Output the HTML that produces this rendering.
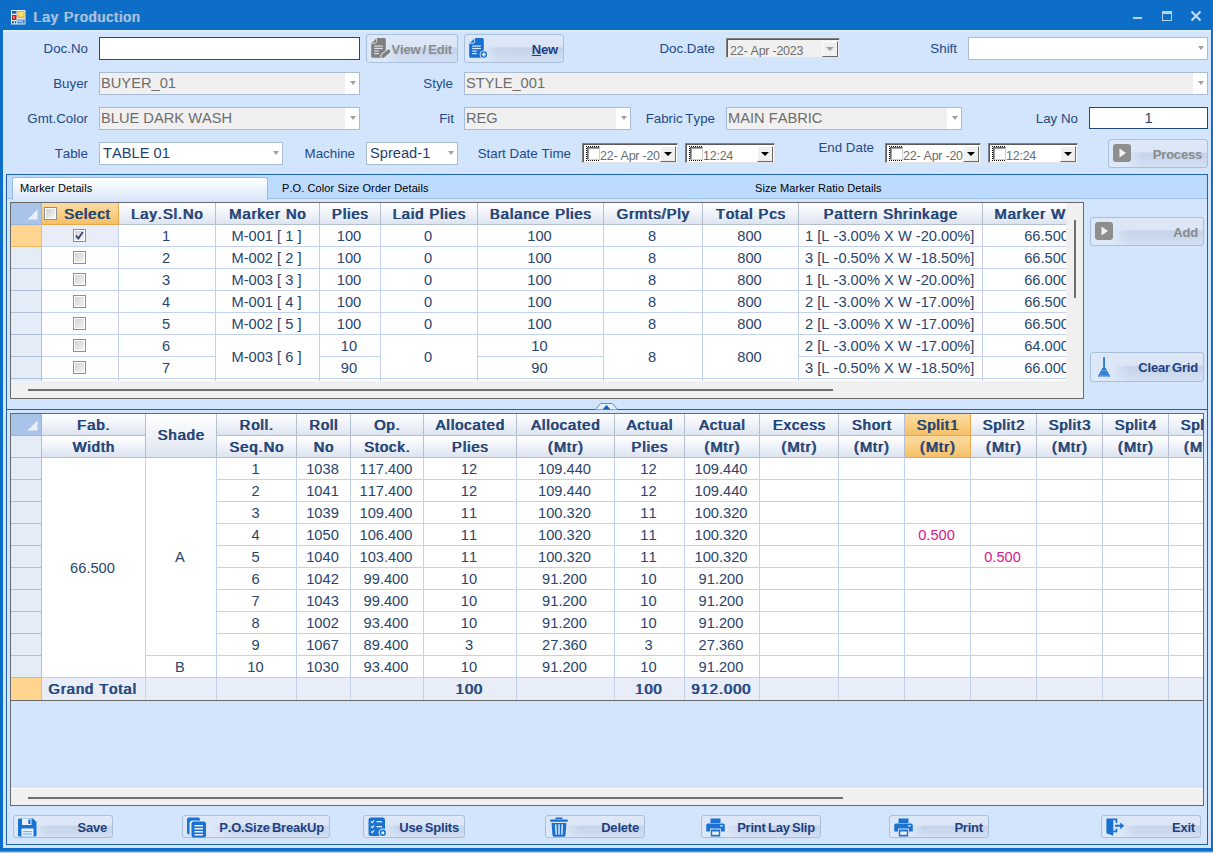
<!DOCTYPE html><html><head><meta charset="utf-8"><title>Lay Production</title><style>
*{box-sizing:border-box;margin:0;padding:0}
html,body{width:1213px;height:853px;overflow:hidden}
body{position:relative;background:#d2e5fd;font-kerning:none;font-family:"Liberation Sans",Arial,sans-serif;font-size:13.33px;color:#1f4a85}
.a{position:absolute;white-space:nowrap}
.lbl{position:absolute;white-space:nowrap;font-size:13.33px;color:#1f4a85;text-align:right;line-height:16px}
.cmb{position:absolute;height:23px;border:1px solid #a8bcd6;background:#f0f0f0;font-size:14.67px;color:#6d6d6d;line-height:21px;padding-left:1px;white-space:nowrap;overflow:hidden}
.cmb.en{background:#fff;color:#1f3f6f;padding-left:3px}
.cmb i{position:absolute;right:0;top:0;width:15px;height:21px;background:#fff}
.cmb i:after{content:"";position:absolute;left:5px;top:8px;border:3.5px solid transparent;border-top:4px solid #a0a0a0;border-bottom:0}
.txt{position:absolute;border:1px solid #1f4a85;background:#fff}
.btn{position:absolute;word-spacing:-1.2px;letter-spacing:-0.2px;border:1px solid #a9bfdc;border-radius:3px;background:linear-gradient(to right,#dce7f7 0%,#dce7f7 20%,rgba(220,231,247,0) 34%),linear-gradient(#dee8f8 0%,#dae5f6 44%,#c4d3ea 48%,#d3e0f3 100%);font-weight:bold;font-size:13px;color:#1f3f7f;white-space:nowrap}
.btn span{position:absolute;right:5px;top:1px;bottom:0;display:flex;align-items:center}
.btn.dis{color:#8a8a8a}
.btn svg{position:absolute}
.dtp{position:absolute;height:20px;background:#fff;border:1px solid;border-color:#828282 #e3e3e3 #e3e3e3 #828282;box-shadow:inset 1px 1px 0 #5a5a5a;font-size:12px;color:#6d6d6d;white-space:nowrap;overflow:hidden}
.dtp .ck{position:absolute;left:3px;top:2px;width:13px;height:15px;border:1px dotted #000}
.dtp .ck:after{content:"";position:absolute;left:0;top:0;width:11px;height:11px;border:1px solid;border-color:#696969 #d4d0c8 #d4d0c8 #696969;background:#fff;box-shadow:inset 1px 1px 0 #a0a0a0}
.dtp .tx{position:absolute;left:17px;top:4px;line-height:16px;letter-spacing:-0.25px;font-size:12.5px}
.dtp .dd{position:absolute;right:1px;top:2px;width:16px;height:16px;background:#f0f0f0;border:1px solid;border-color:#fff #696969 #696969 #fff;box-shadow:0 0 0 0 #000}
.dtp .dd:after{content:"";position:absolute;left:3px;top:5px;border:4px solid transparent;border-top:4px solid #000;border-bottom:0}
.dtp .dg:after{border-top-color:#a0a0a0}
.grid{position:absolute;background:#fff;overflow:hidden}
.hc{position:absolute;background:linear-gradient(#ffffff 0%,#f1f4fa 45%,#dde4f0 100%);border-right:1px solid #b4bfd0;border-bottom:1px solid #b4bfd0;font-size:14.67px;letter-spacing:1px;text-shadow:1px 0 0 currentColor;color:#1e4274;text-align:center;white-space:nowrap;overflow:hidden}
.hc.sel{background:linear-gradient(#fbdba2 0%,#f9cf85 50%,#f4c068 100%);border-color:#e8a94c}
.c{position:absolute;font-size:14.67px;color:#2a446c;text-align:center;padding-right:2px;white-space:nowrap;overflow:hidden;border-right:1px solid #c2d1ec;border-bottom:1px solid #c2d1ec;background:#fff}
.rh{position:absolute;background:#e4ecf7;border-right:1px solid #aebfd9;border-bottom:1px solid #aebfd9}
.cb{position:absolute;width:13px;height:13px;border:1px solid #8e8f8f;background:linear-gradient(135deg,#cfcfcf 0%,#f6f6f6 100%);box-shadow:inset 0 0 0 1px #fff}
</style></head><body>
<div class="a" style="left:0;top:0;width:1213px;height:30px;background:#0d6ec8"></div>
<div class="a" style="left:0;top:0;width:3px;height:853px;background:#0d6ec8"></div>
<div class="a" style="left:1211px;top:0;width:2px;height:853px;background:#0d6ec8"></div>
<div class="a" style="left:0;top:848px;width:1213px;height:5px;background:linear-gradient(#0d6ec8 0,#0d6ec8 55%,#6f9fd0 75%,#e4ebf2 100%)"></div>
<div class="a" style="left:3px;top:30px;width:1208px;height:2px;background:linear-gradient(#e6f1fe,#d8e9fd)"></div>
<svg class="a" style="left:11px;top:10px" width="15" height="15" viewBox="0 0 15 15">
<rect x="0" y="0" width="14.5" height="14.5" fill="#dce9f7"/>
<rect x="1" y="1" width="4.5" height="2.6" fill="#1b5fae"/>
<rect x="1" y="5" width="4.5" height="5" fill="#c8262a"/><rect x="2" y="6" width="1.5" height="2.5" fill="#f08a7a"/>
<rect x="6.5" y="1" width="7" height="7" fill="#e9b321"/><rect x="7.5" y="2" width="5" height="4.5" fill="#fde36b"/>
<rect x="1" y="11.3" width="2" height="2" fill="#1a4f8f"/><rect x="4" y="11.3" width="1.2" height="2" fill="#1a4f8f"/>
<rect x="6.5" y="9.5" width="5" height="4" fill="#3f86d6"/><rect x="7.3" y="10.2" width="3.4" height="2" fill="#9cc8f5"/>
<rect x="12.3" y="9.5" width="1.2" height="4" fill="#1a4f8f"/>
</svg>
<div class="a" style="left:33px;top:8px;font-size:14px;letter-spacing:1px;text-shadow:1px 0 0 currentColor;color:#afc3dc;line-height:18px">Lay Production</div>
<div class="a" style="left:1133px;top:17px;width:9px;height:2px;background:#b9d3ef"></div>
<div class="a" style="left:1162px;top:11px;width:10px;height:10px;border:1px solid #b9d3ef;border-top-width:3px"></div>
<svg class="a" style="left:1190px;top:10px" width="12" height="12" viewBox="0 0 12 12"><path d="M1.5 1.5 L10.5 10.5 M10.5 1.5 L1.5 10.5" stroke="#c3d9f2" stroke-width="2.2" fill="none"/></svg>
<div class="lbl" style="right:1125px;top:41px">Doc.No</div>
<div class="txt" style="left:99px;top:37px;width:261px;height:23px"></div>
<div class="lbl" style="right:1125px;top:76px">Buyer</div>
<div class="cmb" style="left:99px;top:72px;width:261px">BUYER_01<i style="width:14px"></i></div>
<div class="lbl" style="right:1125px;top:111px">Gmt.Color</div>
<div class="cmb" style="left:99px;top:107px;width:261px">BLUE DARK WASH<i style="width:14px"></i></div>
<div class="lbl" style="right:1125px;top:146px">Table</div>
<div class="cmb en" style="left:99px;top:142px;width:184px">TABLE 01<i style="width:14px"></i></div>
<div class="lbl" style="right:760px;top:76px">Style</div>
<div class="cmb" style="left:464px;top:72px;width:744px">STYLE_001<i style="width:14px"></i></div>
<div class="lbl" style="right:759px;top:111px">Fit</div>
<div class="cmb" style="left:464px;top:107px;width:167px">REG<i style="width:14px"></i></div>
<div class="lbl" style="right:858px;top:146px">Machine</div>
<div class="cmb en" style="left:366px;top:142px;width:92px">Spread-1<i style="width:14px"></i></div>
<div class="lbl" style="right:642px;top:146px">Start Date Time</div>
<div class="lbl" style="right:498px;top:41px">Doc.Date</div>
<div class="lbl" style="right:498px;top:111px">Fabric Type</div>
<div class="cmb" style="left:726px;top:107px;width:236px">MAIN FABRIC<i style="width:14px"></i></div>
<div class="lbl" style="right:256px;top:41px">Shift</div>
<div class="cmb en" style="left:968px;top:37px;width:240px"><i style="width:14px"></i></div>
<div class="lbl" style="right:135px;top:111px">Lay No</div>
<div class="txt" style="left:1089px;top:107px;width:119px;height:22px;text-align:center;font-size:14.67px;line-height:20px;color:#1f3f6f">1</div>
<div class="lbl" style="right:339px;top:140px">End Date</div>
<div class="dtp" style="left:726px;top:38px;width:114px;background:#f0f0f0"><span class="tx" style="left:3px">22- Apr -2023</span><span class="dd dg" style="background:#f0f0f0"></span></div>
<div class="dtp" style="left:582px;top:143px;width:96px"><span class="ck"></span><span class="tx">22- Apr -20</span><span class="dd"></span></div>
<div class="dtp" style="left:685px;top:143px;width:90px"><span class="ck"></span><span class="tx">12:24</span><span class="dd"></span></div>
<div class="dtp" style="left:885px;top:143px;width:96px"><span class="ck"></span><span class="tx">22- Apr -20</span><span class="dd"></span></div>
<div class="dtp" style="left:988px;top:143px;width:90px"><span class="ck"></span><span class="tx">12:24</span><span class="dd"></span></div>
<div class="btn dis" style="left:366px;top:34px;width:92px;height:29px"><svg style="left:4px;top:2px" width="22" height="22" viewBox="0 0 22 22"><path d="M5.600 0.900H13.300a1.500 1.500 0 0 1 1.500 1.500V19.200a1.500 1.500 0 0 1-1.500 1.500H1.700a1.500 1.500 0 0 1-1.500-1.500V6.300z" fill="#7f7f7f"/><path d="M0.200 6.300L5.600 0.900V4.600a1.700 1.700 0 0 1-1.700 1.700z" fill="#7f7f7f" stroke="#d9dde3" stroke-width="0.900" stroke-linejoin="round"/><rect x="3.200" y="8.500" width="8.600" height="1.200" fill="#d9dde3"/><rect x="3.200" y="10.900" width="8.600" height="1.200" fill="#d9dde3"/><rect x="3.200" y="13.500" width="4.600" height="1.200" fill="#d9dde3"/><rect x="3.200" y="16" width="4.600" height="1.200" fill="#d9dde3"/><path d="M12 19L17.600 14.200" stroke="#dde5f1" stroke-width="5.400" stroke-linecap="round"/><path d="M12.200 18.900L17.500 14.300" stroke="#7f7f7f" stroke-width="3.600" stroke-linecap="round"/><path d="M10.300 20.700l0.500-2.600 2 2z" fill="#7f7f7f"/></svg><span>View / Edit</span></div>
<div class="btn" style="left:464px;top:34px;width:100px;height:29px"><svg style="left:4px;top:2px" width="22" height="22" viewBox="0 0 22 22"><path d="M5.600 0.900H13.300a1.500 1.500 0 0 1 1.500 1.500V19.200a1.500 1.500 0 0 1-1.500 1.500H1.700a1.500 1.500 0 0 1-1.500-1.500V6.300z" fill="#1a70d0"/><path d="M0.200 6.300L5.600 0.900V4.600a1.700 1.700 0 0 1-1.700 1.700z" fill="#1a70d0" stroke="#d6ecff" stroke-width="0.900" stroke-linejoin="round"/><rect x="3.200" y="8.500" width="8.600" height="1.200" fill="#d6ecff"/><rect x="3.200" y="10.900" width="8.600" height="1.200" fill="#d6ecff"/><rect x="3.200" y="13.500" width="4.600" height="1.200" fill="#d6ecff"/><rect x="3.200" y="16" width="4.600" height="1.200" fill="#d6ecff"/><circle cx="14.800" cy="17.500" r="4.100" fill="#cfe3f8"/><circle cx="14.800" cy="17.500" r="3.200" fill="#1a70d0"/><path d="M14.800 15.600v3.800M12.900 17.500h3.800" stroke="#e6f3ff" stroke-width="1.500"/></svg><span><u>N</u>ew</span></div>
<div class="btn dis" style="left:1108px;top:139px;width:100px;height:29px"><svg style="left:4px;top:4px" width="18" height="18" viewBox="0 0 18 18"><rect x="0" y="0" width="18" height="18" rx="3" fill="#8e8e8e"/><path d="M6.5 4.5L13 9l-6.500 4.500z" fill="#f2f2f2"/></svg><span>Process</span></div>
<div class="a" style="left:6px;top:174px;width:1202px;height:671px;border:1px solid #2062ac"></div>
<div class="a" style="left:7px;top:175px;width:1200px;height:24px;background:#bcdbfe;border-bottom:1px solid #a5c4ea"></div>
<div class="a" style="left:7px;top:199px;width:1200px;height:210px;background:#d2e5fd"></div>
<div class="a" style="left:12px;top:177px;width:256px;height:23px;border:1px solid #9dbbe0;border-bottom:0;border-radius:3px 3px 0 0;background:linear-gradient(#ffffff,#e9f1fc 60%,#d9e8fb)"></div>
<div class="a" style="left:20px;top:181px;font-size:11px;color:#000;line-height:14px;letter-spacing:0.1px">Marker Details</div>
<div class="a" style="left:282px;top:181px;font-size:11px;color:#000;line-height:14px;letter-spacing:0.1px">P.O. Color Size Order Details</div>
<div class="a" style="left:755px;top:181px;font-size:11px;color:#000;line-height:14px;letter-spacing:0.1px">Size Marker Ratio Details</div>
<div class="a" style="left:7px;top:409px;width:1200px;height:1px;background:#2062ac"></div>
<svg class="a" style="left:595px;top:402px" width="24" height="8" viewBox="0 0 24 8"><path d="M0.500 7.500L5.500 1.500h12L22.500 7.500" fill="#e6f0fd" stroke="#5c8fcc" stroke-width="1"/><path d="M7.500 7.500L11.500 3l4 4.500z" fill="#0d5fb5"/></svg>
<div class="grid" style="left:10px;top:202px;width:1074px;height:197px;border:1px solid #6a6a6a;background:#f0f0f0">
<div class="a" style="left:0;top:0;width:1055px;height:178px;overflow:hidden;background:#fff">
<div class="a" style="left:0;top:0;width:31px;height:22px;background:#a9c4e8;border-right:1px solid #9db6d8;border-bottom:1px solid #9db6d8"></div>
<svg class="a" style="left:16px;top:6px" width="11" height="11" viewBox="0 0 11 11"><path d="M10.500 0.500v10h-10z" fill="#e9f0fa"/></svg>
<div class="hc sel" style="left:31px;top:0;width:77px;height:22px;line-height:22px;padding-left:14px">Select</div>
<div class="hc" style="left:108px;top:0;width:97px;height:22px;line-height:22px">Lay.Sl.No</div>
<div class="hc" style="left:205px;top:0;width:104px;height:22px;line-height:22px">Marker No</div>
<div class="hc" style="left:309px;top:0;width:61px;height:22px;line-height:22px">Plies</div>
<div class="hc" style="left:370px;top:0;width:97px;height:22px;line-height:22px">Laid Plies</div>
<div class="hc" style="left:467px;top:0;width:126px;height:22px;line-height:22px">Balance Plies</div>
<div class="hc" style="left:593px;top:0;width:99px;height:22px;line-height:22px">Grmts/Ply</div>
<div class="hc" style="left:692px;top:0;width:96px;height:22px;line-height:22px">Total Pcs</div>
<div class="hc" style="left:788px;top:0;width:184px;height:22px;line-height:22px">Pattern Shrinkage</div>
<div class="hc" style="left:972px;top:0;width:108px;height:22px;line-height:22px;text-align:left;padding-left:11px">Marker Width</div>
<div class="cb" style="left:33px;top:4px"></div>
<div class="rh" style="left:0;top:22px;width:31px;height:22px;background:#ffd58f;border-color:#f0b860"></div>
<div class="c" style="left:31px;top:22px;width:77px;height:22px;background:#e8edf7"></div>
<div class="cb" style="left:62px;top:26px"></div>
<svg class="a" style="left:62px;top:26px" width="13" height="13" viewBox="0 0 13 13"><path d="M3 6.500l2.300 3 4.500-6.500" stroke="#2d4372" stroke-width="1.800" fill="none"/></svg>
<div class="c" style="left:108px;top:22px;width:97px;height:22px;line-height:23px">1</div>
<div class="c" style="left:205px;top:22px;width:104px;height:22px;line-height:23px">M-001 [ 1 ]</div>
<div class="c" style="left:309px;top:22px;width:61px;height:22px;line-height:23px">100</div>
<div class="c" style="left:370px;top:22px;width:97px;height:22px;line-height:23px">0</div>
<div class="c" style="left:467px;top:22px;width:126px;height:22px;line-height:23px">100</div>
<div class="c" style="left:593px;top:22px;width:99px;height:22px;line-height:23px">8</div>
<div class="c" style="left:692px;top:22px;width:96px;height:22px;line-height:23px">800</div>
<div class="c" style="left:788px;top:22px;width:184px;height:22px;line-height:23px;text-align:left;padding-left:6px">1 [L -3.00% X W -20.00%]</div>
<div class="c" style="left:972px;top:22px;width:108px;height:22px;line-height:23px;text-align:right;padding-right:21px">66.500</div>
<div class="rh" style="left:0;top:44px;width:31px;height:22px;background:#e4ecf7;border-color:#aebfd9"></div>
<div class="c" style="left:31px;top:44px;width:77px;height:22px"></div>
<div class="cb" style="left:62px;top:48px"></div>
<div class="c" style="left:108px;top:44px;width:97px;height:22px;line-height:23px">2</div>
<div class="c" style="left:205px;top:44px;width:104px;height:22px;line-height:23px">M-002 [ 2 ]</div>
<div class="c" style="left:309px;top:44px;width:61px;height:22px;line-height:23px">100</div>
<div class="c" style="left:370px;top:44px;width:97px;height:22px;line-height:23px">0</div>
<div class="c" style="left:467px;top:44px;width:126px;height:22px;line-height:23px">100</div>
<div class="c" style="left:593px;top:44px;width:99px;height:22px;line-height:23px">8</div>
<div class="c" style="left:692px;top:44px;width:96px;height:22px;line-height:23px">800</div>
<div class="c" style="left:788px;top:44px;width:184px;height:22px;line-height:23px;text-align:left;padding-left:6px">3 [L -0.50% X W -18.50%]</div>
<div class="c" style="left:972px;top:44px;width:108px;height:22px;line-height:23px;text-align:right;padding-right:21px">66.500</div>
<div class="rh" style="left:0;top:66px;width:31px;height:22px;background:#e4ecf7;border-color:#aebfd9"></div>
<div class="c" style="left:31px;top:66px;width:77px;height:22px"></div>
<div class="cb" style="left:62px;top:70px"></div>
<div class="c" style="left:108px;top:66px;width:97px;height:22px;line-height:23px">3</div>
<div class="c" style="left:205px;top:66px;width:104px;height:22px;line-height:23px">M-003 [ 3 ]</div>
<div class="c" style="left:309px;top:66px;width:61px;height:22px;line-height:23px">100</div>
<div class="c" style="left:370px;top:66px;width:97px;height:22px;line-height:23px">0</div>
<div class="c" style="left:467px;top:66px;width:126px;height:22px;line-height:23px">100</div>
<div class="c" style="left:593px;top:66px;width:99px;height:22px;line-height:23px">8</div>
<div class="c" style="left:692px;top:66px;width:96px;height:22px;line-height:23px">800</div>
<div class="c" style="left:788px;top:66px;width:184px;height:22px;line-height:23px;text-align:left;padding-left:6px">1 [L -3.00% X W -20.00%]</div>
<div class="c" style="left:972px;top:66px;width:108px;height:22px;line-height:23px;text-align:right;padding-right:21px">66.000</div>
<div class="rh" style="left:0;top:88px;width:31px;height:22px;background:#e4ecf7;border-color:#aebfd9"></div>
<div class="c" style="left:31px;top:88px;width:77px;height:22px"></div>
<div class="cb" style="left:62px;top:92px"></div>
<div class="c" style="left:108px;top:88px;width:97px;height:22px;line-height:23px">4</div>
<div class="c" style="left:205px;top:88px;width:104px;height:22px;line-height:23px">M-001 [ 4 ]</div>
<div class="c" style="left:309px;top:88px;width:61px;height:22px;line-height:23px">100</div>
<div class="c" style="left:370px;top:88px;width:97px;height:22px;line-height:23px">0</div>
<div class="c" style="left:467px;top:88px;width:126px;height:22px;line-height:23px">100</div>
<div class="c" style="left:593px;top:88px;width:99px;height:22px;line-height:23px">8</div>
<div class="c" style="left:692px;top:88px;width:96px;height:22px;line-height:23px">800</div>
<div class="c" style="left:788px;top:88px;width:184px;height:22px;line-height:23px;text-align:left;padding-left:6px">2 [L -3.00% X W -17.00%]</div>
<div class="c" style="left:972px;top:88px;width:108px;height:22px;line-height:23px;text-align:right;padding-right:21px">66.500</div>
<div class="rh" style="left:0;top:110px;width:31px;height:22px;background:#e4ecf7;border-color:#aebfd9"></div>
<div class="c" style="left:31px;top:110px;width:77px;height:22px"></div>
<div class="cb" style="left:62px;top:114px"></div>
<div class="c" style="left:108px;top:110px;width:97px;height:22px;line-height:23px">5</div>
<div class="c" style="left:205px;top:110px;width:104px;height:22px;line-height:23px">M-002 [ 5 ]</div>
<div class="c" style="left:309px;top:110px;width:61px;height:22px;line-height:23px">100</div>
<div class="c" style="left:370px;top:110px;width:97px;height:22px;line-height:23px">0</div>
<div class="c" style="left:467px;top:110px;width:126px;height:22px;line-height:23px">100</div>
<div class="c" style="left:593px;top:110px;width:99px;height:22px;line-height:23px">8</div>
<div class="c" style="left:692px;top:110px;width:96px;height:22px;line-height:23px">800</div>
<div class="c" style="left:788px;top:110px;width:184px;height:22px;line-height:23px;text-align:left;padding-left:6px">2 [L -3.00% X W -17.00%]</div>
<div class="c" style="left:972px;top:110px;width:108px;height:22px;line-height:23px;text-align:right;padding-right:21px">66.500</div>
<div class="rh" style="left:0;top:132px;width:31px;height:22px;background:#e4ecf7;border-color:#aebfd9"></div>
<div class="c" style="left:31px;top:132px;width:77px;height:22px"></div>
<div class="cb" style="left:62px;top:136px"></div>
<div class="c" style="left:108px;top:132px;width:97px;height:22px;line-height:23px">6</div>
<div class="c" style="left:205px;top:132px;width:104px;height:44px;line-height:45px">M-003 [ 6 ]</div>
<div class="c" style="left:309px;top:132px;width:61px;height:22px;line-height:23px">10</div>
<div class="c" style="left:370px;top:132px;width:97px;height:44px;line-height:45px">0</div>
<div class="c" style="left:467px;top:132px;width:126px;height:22px;line-height:23px">10</div>
<div class="c" style="left:593px;top:132px;width:99px;height:44px;line-height:45px">8</div>
<div class="c" style="left:692px;top:132px;width:96px;height:44px;line-height:45px">800</div>
<div class="c" style="left:788px;top:132px;width:184px;height:22px;line-height:23px;text-align:left;padding-left:6px">2 [L -3.00% X W -17.00%]</div>
<div class="c" style="left:972px;top:132px;width:108px;height:22px;line-height:23px;text-align:right;padding-right:21px">64.000</div>
<div class="rh" style="left:0;top:154px;width:31px;height:22px;background:#e4ecf7;border-color:#aebfd9"></div>
<div class="c" style="left:31px;top:154px;width:77px;height:22px"></div>
<div class="cb" style="left:62px;top:158px"></div>
<div class="c" style="left:108px;top:154px;width:97px;height:22px;line-height:23px">7</div>
<div class="c" style="left:309px;top:154px;width:61px;height:22px;line-height:23px">90</div>
<div class="c" style="left:467px;top:154px;width:126px;height:22px;line-height:23px">90</div>
<div class="c" style="left:788px;top:154px;width:184px;height:22px;line-height:23px;text-align:left;padding-left:6px">3 [L -0.50% X W -18.50%]</div>
<div class="c" style="left:972px;top:154px;width:108px;height:22px;line-height:23px;text-align:right;padding-right:21px">66.000</div>
<div class="rh" style="left:0;top:176px;width:31px;height:22px;background:#e4ecf7;border-color:#aebfd9"></div>
<div class="c" style="left:31px;top:176px;width:77px;height:22px"></div>
<div class="c" style="left:108px;top:176px;width:97px;height:22px;line-height:23px"></div>
<div class="c" style="left:205px;top:176px;width:104px;height:22px;line-height:23px"></div>
<div class="c" style="left:309px;top:176px;width:61px;height:22px;line-height:23px"></div>
<div class="c" style="left:370px;top:176px;width:97px;height:22px;line-height:23px"></div>
<div class="c" style="left:467px;top:176px;width:126px;height:22px;line-height:23px"></div>
<div class="c" style="left:593px;top:176px;width:99px;height:22px;line-height:23px"></div>
<div class="c" style="left:692px;top:176px;width:96px;height:22px;line-height:23px"></div>
<div class="c" style="left:788px;top:176px;width:184px;height:22px;line-height:23px;text-align:left;padding-left:6px"></div>
<div class="c" style="left:972px;top:176px;width:108px;height:22px;line-height:23px;text-align:right;padding-right:21px"></div>
</div>
<div class="a" style="left:1063px;top:17px;width:2px;height:78px;background:#6e6e6e"></div>
<div class="a" style="left:17px;top:186px;width:805px;height:2px;background:#6e6e6e"></div>
</div>
<div class="btn dis" style="left:1090px;top:217px;width:114px;height:29px"><svg style="left:4px;top:4px" width="18" height="18" viewBox="0 0 18 18"><rect x="0" y="0" width="18" height="18" rx="3" fill="#8e8e8e"/><path d="M6.5 4.5L13 9l-6.500 4.500z" fill="#f2f2f2"/></svg><span>Add</span></div>
<div class="btn" style="left:1090px;top:352px;width:114px;height:30px"><svg style="left:6px;top:3px" width="14" height="22" viewBox="0 0 14 22"><rect x="6.200" y="1" width="1.700" height="12" rx="0.800" fill="#1a70d0"/><path d="M5.200 12.300h3.600l1.200 2.200h-6z" fill="#1a70d0"/><path d="M3.800 14.800h6.400l3.200 6h-2.200l-0.900-2.400 0.100 2.400h-1.800l-0.500-2.600-0.300 2.600h-1.700l-0.200-2.500-0.900 2.500h-1.800l0.800-2.700-1.600 2.700h-1.700z" fill="#2e80dc"/></svg><span>Clear Grid</span></div>
<div class="grid" style="left:10px;top:413px;width:1194px;height:393px;border:1px solid #6a6a6a;background:#d2e5fd">
<div class="a" style="left:0;top:0;width:31px;height:22px;background:#a9c4e8;border-right:1px solid #9db6d8;border-bottom:1px solid #9db6d8"></div>
<svg class="a" style="left:16px;top:6px" width="11" height="11" viewBox="0 0 11 11"><path d="M10.500 0.500v10h-10z" fill="#e9f0fa"/></svg>
<div class="rh" style="left:0;top:22px;width:31px;height:22px"></div>
<div class="hc" style="left:31px;top:0;width:104px;height:22px;line-height:22px">Fab.</div>
<div class="hc" style="left:31px;top:22px;width:104px;height:22px;line-height:22px">Width</div>
<div class="hc" style="left:135px;top:0;width:71px;height:44px;line-height:43px">Shade</div>
<div class="hc" style="left:206px;top:0;width:80px;height:22px;line-height:22px">Roll.</div>
<div class="hc" style="left:206px;top:22px;width:80px;height:22px;line-height:22px">Seq.No</div>
<div class="hc" style="left:286px;top:0;width:54px;height:22px;line-height:22px">Roll</div>
<div class="hc" style="left:286px;top:22px;width:54px;height:22px;line-height:22px">No</div>
<div class="hc" style="left:340px;top:0;width:73px;height:22px;line-height:22px">Op.</div>
<div class="hc" style="left:340px;top:22px;width:73px;height:22px;line-height:22px">Stock.</div>
<div class="hc" style="left:413px;top:0;width:93px;height:22px;line-height:22px">Allocated</div>
<div class="hc" style="left:413px;top:22px;width:93px;height:22px;line-height:22px">Plies</div>
<div class="hc" style="left:506px;top:0;width:98px;height:22px;line-height:22px">Allocated</div>
<div class="hc" style="left:506px;top:22px;width:98px;height:22px;line-height:22px">(Mtr)</div>
<div class="hc" style="left:604px;top:0;width:70px;height:22px;line-height:22px">Actual</div>
<div class="hc" style="left:604px;top:22px;width:70px;height:22px;line-height:22px">Plies</div>
<div class="hc" style="left:674px;top:0;width:75px;height:22px;line-height:22px">Actual</div>
<div class="hc" style="left:674px;top:22px;width:75px;height:22px;line-height:22px">(Mtr)</div>
<div class="hc" style="left:749px;top:0;width:79px;height:22px;line-height:22px">Excess</div>
<div class="hc" style="left:749px;top:22px;width:79px;height:22px;line-height:22px">(Mtr)</div>
<div class="hc" style="left:828px;top:0;width:66px;height:22px;line-height:22px">Short</div>
<div class="hc" style="left:828px;top:22px;width:66px;height:22px;line-height:22px">(Mtr)</div>
<div class="hc sel" style="left:894px;top:0;width:66px;height:22px;line-height:22px">Split1</div>
<div class="hc sel" style="left:894px;top:22px;width:66px;height:22px;line-height:22px">(Mtr)</div>
<div class="hc" style="left:960px;top:0;width:66px;height:22px;line-height:22px">Split2</div>
<div class="hc" style="left:960px;top:22px;width:66px;height:22px;line-height:22px">(Mtr)</div>
<div class="hc" style="left:1026px;top:0;width:66px;height:22px;line-height:22px">Split3</div>
<div class="hc" style="left:1026px;top:22px;width:66px;height:22px;line-height:22px">(Mtr)</div>
<div class="hc" style="left:1092px;top:0;width:66px;height:22px;line-height:22px">Split4</div>
<div class="hc" style="left:1092px;top:22px;width:66px;height:22px;line-height:22px">(Mtr)</div>
<div class="hc" style="left:1158px;top:0;width:66px;height:22px;line-height:22px">Split5</div>
<div class="hc" style="left:1158px;top:22px;width:66px;height:22px;line-height:22px">(Mtr)</div>
<div class="c" style="left:31px;top:44px;width:104px;height:220px;line-height:221px;">66.500</div>
<div class="c" style="left:135px;top:44px;width:71px;height:198px;line-height:199px;">A</div>
<div class="c" style="left:135px;top:242px;width:71px;height:22px;line-height:23px;">B</div>
<div class="rh" style="left:0;top:44px;width:31px;height:22px"></div>
<div class="c" style="left:206px;top:44px;width:80px;height:22px;line-height:23px;">1</div>
<div class="c" style="left:286px;top:44px;width:54px;height:22px;line-height:23px;">1038</div>
<div class="c" style="left:340px;top:44px;width:73px;height:22px;line-height:23px;">117.400</div>
<div class="c" style="left:413px;top:44px;width:93px;height:22px;line-height:23px;">12</div>
<div class="c" style="left:506px;top:44px;width:98px;height:22px;line-height:23px;">109.440</div>
<div class="c" style="left:604px;top:44px;width:70px;height:22px;line-height:23px;">12</div>
<div class="c" style="left:674px;top:44px;width:75px;height:22px;line-height:23px;">109.440</div>
<div class="c" style="left:749px;top:44px;width:79px;height:22px;line-height:23px;"></div>
<div class="c" style="left:828px;top:44px;width:66px;height:22px;line-height:23px;"></div>
<div class="c" style="left:894px;top:44px;width:66px;height:22px;line-height:23px;"></div>
<div class="c" style="left:960px;top:44px;width:66px;height:22px;line-height:23px;"></div>
<div class="c" style="left:1026px;top:44px;width:66px;height:22px;line-height:23px;"></div>
<div class="c" style="left:1092px;top:44px;width:66px;height:22px;line-height:23px;"></div>
<div class="c" style="left:1158px;top:44px;width:66px;height:22px;line-height:23px;"></div>
<div class="rh" style="left:0;top:66px;width:31px;height:22px"></div>
<div class="c" style="left:206px;top:66px;width:80px;height:22px;line-height:23px;">2</div>
<div class="c" style="left:286px;top:66px;width:54px;height:22px;line-height:23px;">1041</div>
<div class="c" style="left:340px;top:66px;width:73px;height:22px;line-height:23px;">117.400</div>
<div class="c" style="left:413px;top:66px;width:93px;height:22px;line-height:23px;">12</div>
<div class="c" style="left:506px;top:66px;width:98px;height:22px;line-height:23px;">109.440</div>
<div class="c" style="left:604px;top:66px;width:70px;height:22px;line-height:23px;">12</div>
<div class="c" style="left:674px;top:66px;width:75px;height:22px;line-height:23px;">109.440</div>
<div class="c" style="left:749px;top:66px;width:79px;height:22px;line-height:23px;"></div>
<div class="c" style="left:828px;top:66px;width:66px;height:22px;line-height:23px;"></div>
<div class="c" style="left:894px;top:66px;width:66px;height:22px;line-height:23px;"></div>
<div class="c" style="left:960px;top:66px;width:66px;height:22px;line-height:23px;"></div>
<div class="c" style="left:1026px;top:66px;width:66px;height:22px;line-height:23px;"></div>
<div class="c" style="left:1092px;top:66px;width:66px;height:22px;line-height:23px;"></div>
<div class="c" style="left:1158px;top:66px;width:66px;height:22px;line-height:23px;"></div>
<div class="rh" style="left:0;top:88px;width:31px;height:22px"></div>
<div class="c" style="left:206px;top:88px;width:80px;height:22px;line-height:23px;">3</div>
<div class="c" style="left:286px;top:88px;width:54px;height:22px;line-height:23px;">1039</div>
<div class="c" style="left:340px;top:88px;width:73px;height:22px;line-height:23px;">109.400</div>
<div class="c" style="left:413px;top:88px;width:93px;height:22px;line-height:23px;">11</div>
<div class="c" style="left:506px;top:88px;width:98px;height:22px;line-height:23px;">100.320</div>
<div class="c" style="left:604px;top:88px;width:70px;height:22px;line-height:23px;">11</div>
<div class="c" style="left:674px;top:88px;width:75px;height:22px;line-height:23px;">100.320</div>
<div class="c" style="left:749px;top:88px;width:79px;height:22px;line-height:23px;"></div>
<div class="c" style="left:828px;top:88px;width:66px;height:22px;line-height:23px;"></div>
<div class="c" style="left:894px;top:88px;width:66px;height:22px;line-height:23px;"></div>
<div class="c" style="left:960px;top:88px;width:66px;height:22px;line-height:23px;"></div>
<div class="c" style="left:1026px;top:88px;width:66px;height:22px;line-height:23px;"></div>
<div class="c" style="left:1092px;top:88px;width:66px;height:22px;line-height:23px;"></div>
<div class="c" style="left:1158px;top:88px;width:66px;height:22px;line-height:23px;"></div>
<div class="rh" style="left:0;top:110px;width:31px;height:22px"></div>
<div class="c" style="left:206px;top:110px;width:80px;height:22px;line-height:23px;">4</div>
<div class="c" style="left:286px;top:110px;width:54px;height:22px;line-height:23px;">1050</div>
<div class="c" style="left:340px;top:110px;width:73px;height:22px;line-height:23px;">106.400</div>
<div class="c" style="left:413px;top:110px;width:93px;height:22px;line-height:23px;">11</div>
<div class="c" style="left:506px;top:110px;width:98px;height:22px;line-height:23px;">100.320</div>
<div class="c" style="left:604px;top:110px;width:70px;height:22px;line-height:23px;">11</div>
<div class="c" style="left:674px;top:110px;width:75px;height:22px;line-height:23px;">100.320</div>
<div class="c" style="left:749px;top:110px;width:79px;height:22px;line-height:23px;"></div>
<div class="c" style="left:828px;top:110px;width:66px;height:22px;line-height:23px;"></div>
<div class="c" style="left:894px;top:110px;width:66px;height:22px;line-height:23px;color:#d6198a">0.500</div>
<div class="c" style="left:960px;top:110px;width:66px;height:22px;line-height:23px;"></div>
<div class="c" style="left:1026px;top:110px;width:66px;height:22px;line-height:23px;"></div>
<div class="c" style="left:1092px;top:110px;width:66px;height:22px;line-height:23px;"></div>
<div class="c" style="left:1158px;top:110px;width:66px;height:22px;line-height:23px;"></div>
<div class="rh" style="left:0;top:132px;width:31px;height:22px"></div>
<div class="c" style="left:206px;top:132px;width:80px;height:22px;line-height:23px;">5</div>
<div class="c" style="left:286px;top:132px;width:54px;height:22px;line-height:23px;">1040</div>
<div class="c" style="left:340px;top:132px;width:73px;height:22px;line-height:23px;">103.400</div>
<div class="c" style="left:413px;top:132px;width:93px;height:22px;line-height:23px;">11</div>
<div class="c" style="left:506px;top:132px;width:98px;height:22px;line-height:23px;">100.320</div>
<div class="c" style="left:604px;top:132px;width:70px;height:22px;line-height:23px;">11</div>
<div class="c" style="left:674px;top:132px;width:75px;height:22px;line-height:23px;">100.320</div>
<div class="c" style="left:749px;top:132px;width:79px;height:22px;line-height:23px;"></div>
<div class="c" style="left:828px;top:132px;width:66px;height:22px;line-height:23px;"></div>
<div class="c" style="left:894px;top:132px;width:66px;height:22px;line-height:23px;"></div>
<div class="c" style="left:960px;top:132px;width:66px;height:22px;line-height:23px;color:#d6198a">0.500</div>
<div class="c" style="left:1026px;top:132px;width:66px;height:22px;line-height:23px;"></div>
<div class="c" style="left:1092px;top:132px;width:66px;height:22px;line-height:23px;"></div>
<div class="c" style="left:1158px;top:132px;width:66px;height:22px;line-height:23px;"></div>
<div class="rh" style="left:0;top:154px;width:31px;height:22px"></div>
<div class="c" style="left:206px;top:154px;width:80px;height:22px;line-height:23px;">6</div>
<div class="c" style="left:286px;top:154px;width:54px;height:22px;line-height:23px;">1042</div>
<div class="c" style="left:340px;top:154px;width:73px;height:22px;line-height:23px;">99.400</div>
<div class="c" style="left:413px;top:154px;width:93px;height:22px;line-height:23px;">10</div>
<div class="c" style="left:506px;top:154px;width:98px;height:22px;line-height:23px;">91.200</div>
<div class="c" style="left:604px;top:154px;width:70px;height:22px;line-height:23px;">10</div>
<div class="c" style="left:674px;top:154px;width:75px;height:22px;line-height:23px;">91.200</div>
<div class="c" style="left:749px;top:154px;width:79px;height:22px;line-height:23px;"></div>
<div class="c" style="left:828px;top:154px;width:66px;height:22px;line-height:23px;"></div>
<div class="c" style="left:894px;top:154px;width:66px;height:22px;line-height:23px;"></div>
<div class="c" style="left:960px;top:154px;width:66px;height:22px;line-height:23px;"></div>
<div class="c" style="left:1026px;top:154px;width:66px;height:22px;line-height:23px;"></div>
<div class="c" style="left:1092px;top:154px;width:66px;height:22px;line-height:23px;"></div>
<div class="c" style="left:1158px;top:154px;width:66px;height:22px;line-height:23px;"></div>
<div class="rh" style="left:0;top:176px;width:31px;height:22px"></div>
<div class="c" style="left:206px;top:176px;width:80px;height:22px;line-height:23px;">7</div>
<div class="c" style="left:286px;top:176px;width:54px;height:22px;line-height:23px;">1043</div>
<div class="c" style="left:340px;top:176px;width:73px;height:22px;line-height:23px;">99.400</div>
<div class="c" style="left:413px;top:176px;width:93px;height:22px;line-height:23px;">10</div>
<div class="c" style="left:506px;top:176px;width:98px;height:22px;line-height:23px;">91.200</div>
<div class="c" style="left:604px;top:176px;width:70px;height:22px;line-height:23px;">10</div>
<div class="c" style="left:674px;top:176px;width:75px;height:22px;line-height:23px;">91.200</div>
<div class="c" style="left:749px;top:176px;width:79px;height:22px;line-height:23px;"></div>
<div class="c" style="left:828px;top:176px;width:66px;height:22px;line-height:23px;"></div>
<div class="c" style="left:894px;top:176px;width:66px;height:22px;line-height:23px;"></div>
<div class="c" style="left:960px;top:176px;width:66px;height:22px;line-height:23px;"></div>
<div class="c" style="left:1026px;top:176px;width:66px;height:22px;line-height:23px;"></div>
<div class="c" style="left:1092px;top:176px;width:66px;height:22px;line-height:23px;"></div>
<div class="c" style="left:1158px;top:176px;width:66px;height:22px;line-height:23px;"></div>
<div class="rh" style="left:0;top:198px;width:31px;height:22px"></div>
<div class="c" style="left:206px;top:198px;width:80px;height:22px;line-height:23px;">8</div>
<div class="c" style="left:286px;top:198px;width:54px;height:22px;line-height:23px;">1002</div>
<div class="c" style="left:340px;top:198px;width:73px;height:22px;line-height:23px;">93.400</div>
<div class="c" style="left:413px;top:198px;width:93px;height:22px;line-height:23px;">10</div>
<div class="c" style="left:506px;top:198px;width:98px;height:22px;line-height:23px;">91.200</div>
<div class="c" style="left:604px;top:198px;width:70px;height:22px;line-height:23px;">10</div>
<div class="c" style="left:674px;top:198px;width:75px;height:22px;line-height:23px;">91.200</div>
<div class="c" style="left:749px;top:198px;width:79px;height:22px;line-height:23px;"></div>
<div class="c" style="left:828px;top:198px;width:66px;height:22px;line-height:23px;"></div>
<div class="c" style="left:894px;top:198px;width:66px;height:22px;line-height:23px;"></div>
<div class="c" style="left:960px;top:198px;width:66px;height:22px;line-height:23px;"></div>
<div class="c" style="left:1026px;top:198px;width:66px;height:22px;line-height:23px;"></div>
<div class="c" style="left:1092px;top:198px;width:66px;height:22px;line-height:23px;"></div>
<div class="c" style="left:1158px;top:198px;width:66px;height:22px;line-height:23px;"></div>
<div class="rh" style="left:0;top:220px;width:31px;height:22px"></div>
<div class="c" style="left:206px;top:220px;width:80px;height:22px;line-height:23px;">9</div>
<div class="c" style="left:286px;top:220px;width:54px;height:22px;line-height:23px;">1067</div>
<div class="c" style="left:340px;top:220px;width:73px;height:22px;line-height:23px;">89.400</div>
<div class="c" style="left:413px;top:220px;width:93px;height:22px;line-height:23px;">3</div>
<div class="c" style="left:506px;top:220px;width:98px;height:22px;line-height:23px;">27.360</div>
<div class="c" style="left:604px;top:220px;width:70px;height:22px;line-height:23px;">3</div>
<div class="c" style="left:674px;top:220px;width:75px;height:22px;line-height:23px;">27.360</div>
<div class="c" style="left:749px;top:220px;width:79px;height:22px;line-height:23px;"></div>
<div class="c" style="left:828px;top:220px;width:66px;height:22px;line-height:23px;"></div>
<div class="c" style="left:894px;top:220px;width:66px;height:22px;line-height:23px;"></div>
<div class="c" style="left:960px;top:220px;width:66px;height:22px;line-height:23px;"></div>
<div class="c" style="left:1026px;top:220px;width:66px;height:22px;line-height:23px;"></div>
<div class="c" style="left:1092px;top:220px;width:66px;height:22px;line-height:23px;"></div>
<div class="c" style="left:1158px;top:220px;width:66px;height:22px;line-height:23px;"></div>
<div class="rh" style="left:0;top:242px;width:31px;height:22px"></div>
<div class="c" style="left:206px;top:242px;width:80px;height:22px;line-height:23px;">10</div>
<div class="c" style="left:286px;top:242px;width:54px;height:22px;line-height:23px;">1030</div>
<div class="c" style="left:340px;top:242px;width:73px;height:22px;line-height:23px;">93.400</div>
<div class="c" style="left:413px;top:242px;width:93px;height:22px;line-height:23px;">10</div>
<div class="c" style="left:506px;top:242px;width:98px;height:22px;line-height:23px;">91.200</div>
<div class="c" style="left:604px;top:242px;width:70px;height:22px;line-height:23px;">10</div>
<div class="c" style="left:674px;top:242px;width:75px;height:22px;line-height:23px;">91.200</div>
<div class="c" style="left:749px;top:242px;width:79px;height:22px;line-height:23px;"></div>
<div class="c" style="left:828px;top:242px;width:66px;height:22px;line-height:23px;"></div>
<div class="c" style="left:894px;top:242px;width:66px;height:22px;line-height:23px;"></div>
<div class="c" style="left:960px;top:242px;width:66px;height:22px;line-height:23px;"></div>
<div class="c" style="left:1026px;top:242px;width:66px;height:22px;line-height:23px;"></div>
<div class="c" style="left:1092px;top:242px;width:66px;height:22px;line-height:23px;"></div>
<div class="c" style="left:1158px;top:242px;width:66px;height:22px;line-height:23px;"></div>
<div class="rh" style="left:0;top:264px;width:31px;height:23px;background:#ffd58f;border-color:#f0b860"></div>
<div class="c" style="left:31px;top:264px;width:104px;height:23px;line-height:24px;background:#e8edf7;font-size:14.67px;letter-spacing:1px;text-shadow:1px 0 0 currentColor;color:#1f477d;text-align:left;padding-left:6px;line-height:23px">Grand Total</div>
<div class="c" style="left:135px;top:264px;width:71px;height:23px;line-height:24px;background:#e8edf7;font-size:14.67px;letter-spacing:1px;text-shadow:1px 0 0 currentColor;color:#1f477d;line-height:23px"></div>
<div class="c" style="left:206px;top:264px;width:80px;height:23px;line-height:24px;background:#e8edf7;font-size:14.67px;letter-spacing:1px;text-shadow:1px 0 0 currentColor;color:#1f477d;line-height:23px"></div>
<div class="c" style="left:286px;top:264px;width:54px;height:23px;line-height:24px;background:#e8edf7;font-size:14.67px;letter-spacing:1px;text-shadow:1px 0 0 currentColor;color:#1f477d;line-height:23px"></div>
<div class="c" style="left:340px;top:264px;width:73px;height:23px;line-height:24px;background:#e8edf7;font-size:14.67px;letter-spacing:1px;text-shadow:1px 0 0 currentColor;color:#1f477d;line-height:23px"></div>
<div class="c" style="left:413px;top:264px;width:93px;height:23px;line-height:24px;background:#e8edf7;font-size:14.67px;letter-spacing:1px;text-shadow:1px 0 0 currentColor;color:#1f477d;line-height:23px">100</div>
<div class="c" style="left:506px;top:264px;width:98px;height:23px;line-height:24px;background:#e8edf7;font-size:14.67px;letter-spacing:1px;text-shadow:1px 0 0 currentColor;color:#1f477d;line-height:23px"></div>
<div class="c" style="left:604px;top:264px;width:70px;height:23px;line-height:24px;background:#e8edf7;font-size:14.67px;letter-spacing:1px;text-shadow:1px 0 0 currentColor;color:#1f477d;line-height:23px">100</div>
<div class="c" style="left:674px;top:264px;width:75px;height:23px;line-height:24px;background:#e8edf7;font-size:14.67px;letter-spacing:1px;text-shadow:1px 0 0 currentColor;color:#1f477d;line-height:23px">912.000</div>
<div class="c" style="left:749px;top:264px;width:79px;height:23px;line-height:24px;background:#e8edf7;font-size:14.67px;letter-spacing:1px;text-shadow:1px 0 0 currentColor;color:#1f477d;line-height:23px"></div>
<div class="c" style="left:828px;top:264px;width:66px;height:23px;line-height:24px;background:#e8edf7;font-size:14.67px;letter-spacing:1px;text-shadow:1px 0 0 currentColor;color:#1f477d;line-height:23px"></div>
<div class="c" style="left:894px;top:264px;width:66px;height:23px;line-height:24px;background:#e8edf7;font-size:14.67px;letter-spacing:1px;text-shadow:1px 0 0 currentColor;color:#1f477d;line-height:23px"></div>
<div class="c" style="left:960px;top:264px;width:66px;height:23px;line-height:24px;background:#e8edf7;font-size:14.67px;letter-spacing:1px;text-shadow:1px 0 0 currentColor;color:#1f477d;line-height:23px"></div>
<div class="c" style="left:1026px;top:264px;width:66px;height:23px;line-height:24px;background:#e8edf7;font-size:14.67px;letter-spacing:1px;text-shadow:1px 0 0 currentColor;color:#1f477d;line-height:23px"></div>
<div class="c" style="left:1092px;top:264px;width:66px;height:23px;line-height:24px;background:#e8edf7;font-size:14.67px;letter-spacing:1px;text-shadow:1px 0 0 currentColor;color:#1f477d;line-height:23px"></div>
<div class="c" style="left:1158px;top:264px;width:66px;height:23px;line-height:24px;background:#e8edf7;font-size:14.67px;letter-spacing:1px;text-shadow:1px 0 0 currentColor;color:#1f477d;line-height:23px"></div>
<div class="a" style="left:0;top:286px;width:1192px;height:1px;background:#6a6a6a"></div>
<div class="a" style="left:0;top:374px;width:1192px;height:18px;background:#f0f0f0;border-top:1px solid #fff"></div>
<div class="a" style="left:17px;top:383px;width:815px;height:2px;background:#6e6e6e"></div>
</div>
<div class="btn" style="left:13px;top:815px;width:100px;height:23px"><svg style="left:4px;top:2px" width="19" height="19" viewBox="0 0 19 19"><path d="M1.500 0.500h13.500l3.500 3.500v13a1.500 1.500 0 0 1-1.500 1.500h-15.500a1.500 1.500 0 0 1-1.500-1.500v-15a1.500 1.500 0 0 1 1.500-1.500z" fill="#1a73d2"/><rect x="4" y="0.500" width="9.500" height="6.500" fill="#e9f2fc"/><rect x="10.300" y="1.500" width="2.200" height="4.500" fill="#1a73d2"/><rect x="3.500" y="10.500" width="12" height="8" fill="#e9f2fc"/><rect x="5" y="13" width="9" height="1.200" fill="#7fb2ea"/><rect x="5" y="15.500" width="9" height="1.200" fill="#7fb2ea"/></svg><span>Save</span></div>
<div class="btn" style="left:182px;top:815px;width:148px;height:23px"><svg style="left:3px;top:1px" width="21" height="21" viewBox="0 0 21 21"><path d="M3 0.500h9a2 2 0 0 1 2 2v1h-7.500a3 3 0 0 0-3 3v11h-0.500a2 2 0 0 1-2-2v-13a2 2 0 0 1 2-2z" fill="#1a73d2"/><rect x="5.500" y="4.500" width="14.500" height="16" rx="2.200" fill="#1a73d2"/><rect x="8.500" y="8" width="8.500" height="1.500" fill="#e9f2fc"/><rect x="8.500" y="11" width="8.500" height="1.500" fill="#e9f2fc"/><rect x="8.500" y="14" width="8.500" height="1.500" fill="#e9f2fc"/><rect x="8.500" y="17" width="8.500" height="1.500" fill="#e9f2fc"/></svg><span>P.O.Size BreakUp</span></div>
<div class="btn" style="left:363px;top:815px;width:102px;height:23px"><svg style="left:4px;top:1px" width="20" height="21" viewBox="0 0 20 21"><rect x="0.500" y="0.500" width="16.500" height="18.500" rx="2.500" fill="#1a73d2"/><path d="M3 4.500l1.200 1.200 2-2.400M3 9.500l1.200 1.200 2-2.400M3 14.500l1.200 1.200 2-2.400" stroke="#e9f2fc" stroke-width="1.100" fill="none"/><rect x="8.500" y="4" width="5.500" height="1.300" fill="#e9f2fc"/><rect x="8.500" y="9" width="5.500" height="1.300" fill="#e9f2fc"/><circle cx="14.800" cy="15.800" r="4.300" fill="#e9f2fc"/><circle cx="14.800" cy="15.800" r="3.200" fill="#1a73d2"/><circle cx="14.800" cy="15.800" r="1.600" fill="#e9f2fc"/></svg><span>Use Splits</span></div>
<div class="btn" style="left:545px;top:815px;width:100px;height:23px"><svg style="left:4px;top:1px" width="18" height="20" viewBox="0 0 18 20"><path d="M6.300 2.600V1.200h5.400V2.600" fill="none" stroke="#1a70d0" stroke-width="1.400"/><rect x="0.200" y="2.500" width="17.600" height="2.300" rx="0.600" fill="#1a70d0"/><path d="M1.600 6h14.800l-0.900 12.300a1.600 1.600 0 0 1-1.600 1.400h-9.800a1.600 1.600 0 0 1-1.600-1.400z" fill="#1a70d0"/><path d="M5.700 7.200l0.500 10.600M9 7.200v10.600M12.300 7.200l-0.500 10.600" stroke="#d6ecff" stroke-width="1.500"/></svg><span>Delete</span></div>
<div class="btn" style="left:701px;top:815px;width:120px;height:23px"><svg style="left:4px;top:2px" width="19" height="19" viewBox="0 0 19 19"><rect x="4.500" y="0.500" width="10" height="4.500" fill="#1a73d2"/><path d="M2 5.500h15a1.800 1.800 0 0 1 1.800 1.800v6.200h-3.800v-3h-11v3h-3.800v-6.200a1.800 1.800 0 0 1 1.800-1.800z" fill="#1a73d2"/><rect x="14.200" y="7.200" width="2.500" height="1.300" fill="#e9f2fc"/><path d="M4.800 11.500h9.400v7h-9.400z" fill="#1a73d2"/><rect x="6.200" y="13.500" width="6.600" height="3.300" fill="#e9f2fc"/></svg><span>Print Lay Slip</span></div>
<div class="btn" style="left:889px;top:815px;width:100px;height:23px"><svg style="left:4px;top:2px" width="19" height="19" viewBox="0 0 19 19"><rect x="4.500" y="0.500" width="10" height="4.500" fill="#1a73d2"/><path d="M2 5.500h15a1.800 1.800 0 0 1 1.800 1.800v6.200h-3.800v-3h-11v3h-3.800v-6.200a1.800 1.800 0 0 1 1.800-1.800z" fill="#1a73d2"/><rect x="14.200" y="7.200" width="2.500" height="1.300" fill="#e9f2fc"/><path d="M4.800 11.500h9.400v7h-9.400z" fill="#1a73d2"/><rect x="6.200" y="13.500" width="6.600" height="3.300" fill="#e9f2fc"/></svg><span>Print</span></div>
<div class="btn" style="left:1101px;top:815px;width:100px;height:23px"><svg style="left:4px;top:2px" width="20" height="19" viewBox="0 0 20 19"><path d="M0.400 0.400H7.300V17.700L0.400 15.200z" fill="#1a70d0"/><path d="M7.300 0.400H11.300V5H9.700V2.200H7.300zM7.300 14.300H11.300V10.800H9.700V12.600H7.300z" fill="#1a70d0"/><path d="M9 6.800H14.200V4.400L18.200 7.800L14.200 11.300V8.800H9z" fill="#1a70d0"/></svg><span>Exit</span></div>
</body></html>
